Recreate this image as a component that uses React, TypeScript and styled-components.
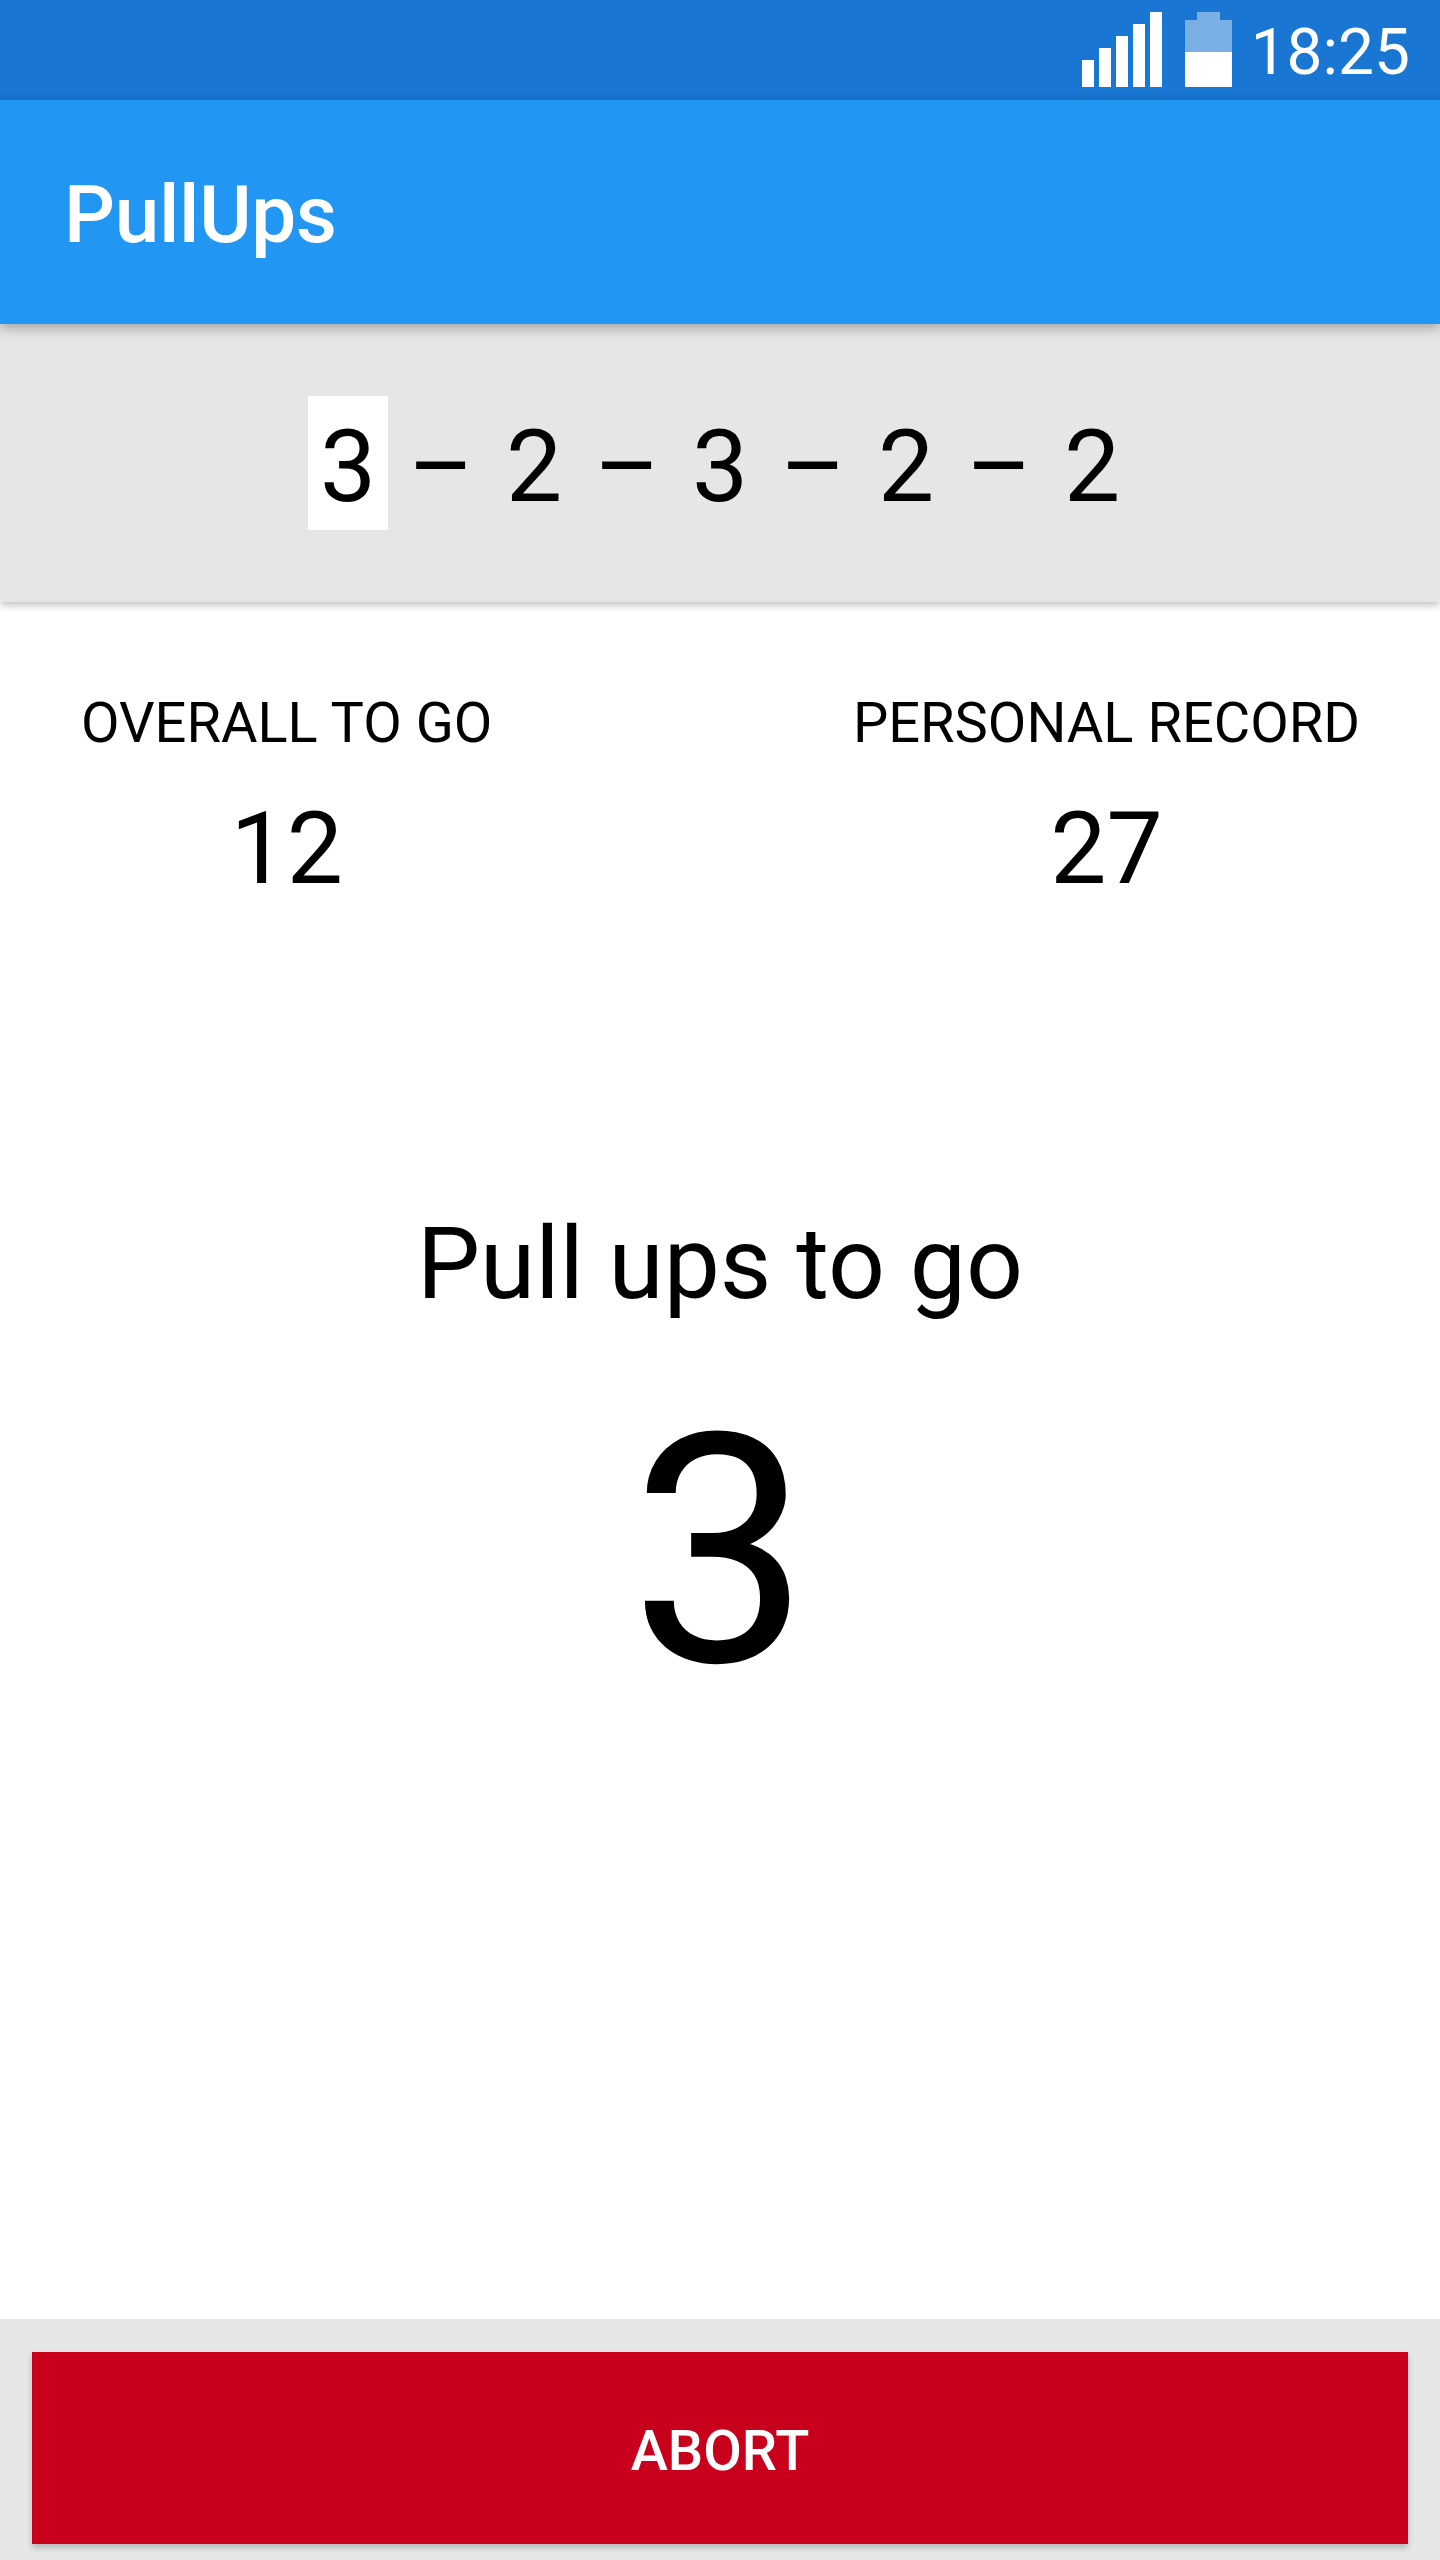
import * as React from "react";
import styled, { createGlobalStyle } from "styled-components";

const GlobalStyle = createGlobalStyle`
	html, body {
		margin: 0;
		padding: 0;
		background: #fff;
		font-family: Roboto, "Liberation Sans", sans-serif;
	}
`;

const Screen = styled.div`
	width: 1440px;
	height: 2560px;
	display: flex;
	flex-direction: column;
	overflow: hidden;
	color: #000;
`;

const StatusBar = styled.div`
	height: 100px;
	flex: none;
	background: #1976d2;
	display: flex;
	justify-content: flex-end;
	padding: 12px 30px 0 0;
	box-sizing: border-box;
`;

const StatusIcon = styled.svg<{ $gap?: number }>`
	display: block;
	flex: none;
	margin-left: ${(p) => p.$gap ?? 0}px;
`;

const Clock = styled.span`
	margin-left: 19px;
	font-size: 64px;
	line-height: 82px;
	font-weight: 400;
	color: #fff;
`;

const AppBar = styled.header`
	height: 224px;
	flex: none;
	position: relative;
	z-index: 2;
	box-sizing: border-box;
	background: #2196f3;
	box-shadow: 0 4px 12px rgba(0, 0, 0, 0.3);
	display: flex;
	align-items: center;
	padding: 6px 0 0 64px;
	font-size: 80px;
	font-weight: 500;
	letter-spacing: -0.3px;
	color: #fff;
`;

const Sequence = styled.div`
	height: 278px;
	flex: none;
	position: relative;
	z-index: 1;
	background: #e6e6e6;
	box-shadow: 0 3px 8px rgba(0, 0, 0, 0.25);
	display: flex;
	justify-content: center;
	align-items: center;
	font-size: 100px;
`;

const SetCount = styled.span<{ $current?: boolean }>`
	width: 80px;
	height: 134px;
	line-height: 142px;
	text-align: center;
	background: ${(p) => (p.$current ? "#fff" : "transparent")};
`;

const Dash = styled.span`
	width: 106px;
	height: 134px;
	line-height: 142px;
	text-align: center;
`;

const Stats = styled.div`
	display: flex;
	justify-content: space-between;
	padding: 88px 80px 0 81px;
`;

const Stat = styled.div`
	display: flex;
	flex-direction: column;
	align-items: center;
`;

const StatLabel = styled.div`
	font-size: 56px;
	line-height: 66px;
`;

const StatValue = styled.div`
	font-size: 100px;
	line-height: 118px;
	margin-top: 34px;
`;

const Current = styled.main`
	display: flex;
	flex-direction: column;
	align-items: center;
	margin-top: 297px;
`;

const CurrentLabel = styled.div`
	font-size: 100px;
	line-height: 118px;
`;

const CurrentValue = styled.div`
	font-size: 320px;
	line-height: 376px;
	margin-top: 41px;
`;

const Footer = styled.footer`
	margin-top: auto;
	flex: none;
	background: #e6e6e6;
	padding: 33px 32px 16px;
`;

const AbortButton = styled.button`
	display: block;
	width: 100%;
	height: 192px;
	border: 0;
	padding: 6px 0 0;
	background: #c8001c;
	box-shadow: 0 4px 6px rgba(0, 0, 0, 0.2);
	font-family: inherit;
	font-size: 56px;
	font-weight: 500;
	color: #fff;
`;

const sets = [3, 2, 3, 2, 2];
const signalBars = [60, 48, 36, 24, 12];

export default function App(): JSX.Element {
	return (
		<Screen>
			<GlobalStyle />
			<StatusBar>
				<StatusIcon width="80" height="75" viewBox="0 0 80 75">
					{signalBars.map((top, i) => (
						<rect key={top} x={i * 17} y={top - 12} width="12" height={87 - top} fill="#fff" />
					))}
				</StatusIcon>
				<StatusIcon $gap={23} width="47" height="75" viewBox="0 0 47 75">
					<path d="M12 0h23v8h12v32H0V8h12z" fill="#fff" fillOpacity="0.42" />
					<rect y="40" width="47" height="35" fill="#fff" />
				</StatusIcon>
				<Clock>18:25</Clock>
			</StatusBar>
			<AppBar>PullUps</AppBar>
			<Sequence>
				{sets.map((count, i) => (
					<React.Fragment key={i}>
						{i > 0 && <Dash>–</Dash>}
						<SetCount $current={i === 0}>{count}</SetCount>
					</React.Fragment>
				))}
			</Sequence>
			<Stats>
				<Stat>
					<StatLabel>OVERALL TO GO</StatLabel>
					<StatValue>12</StatValue>
				</Stat>
				<Stat>
					<StatLabel>PERSONAL RECORD</StatLabel>
					<StatValue>27</StatValue>
				</Stat>
			</Stats>
			<Current>
				<CurrentLabel>Pull ups to go</CurrentLabel>
				<CurrentValue>3</CurrentValue>
			</Current>
			<Footer>
				<AbortButton>ABORT</AbortButton>
			</Footer>
		</Screen>
	);
}
